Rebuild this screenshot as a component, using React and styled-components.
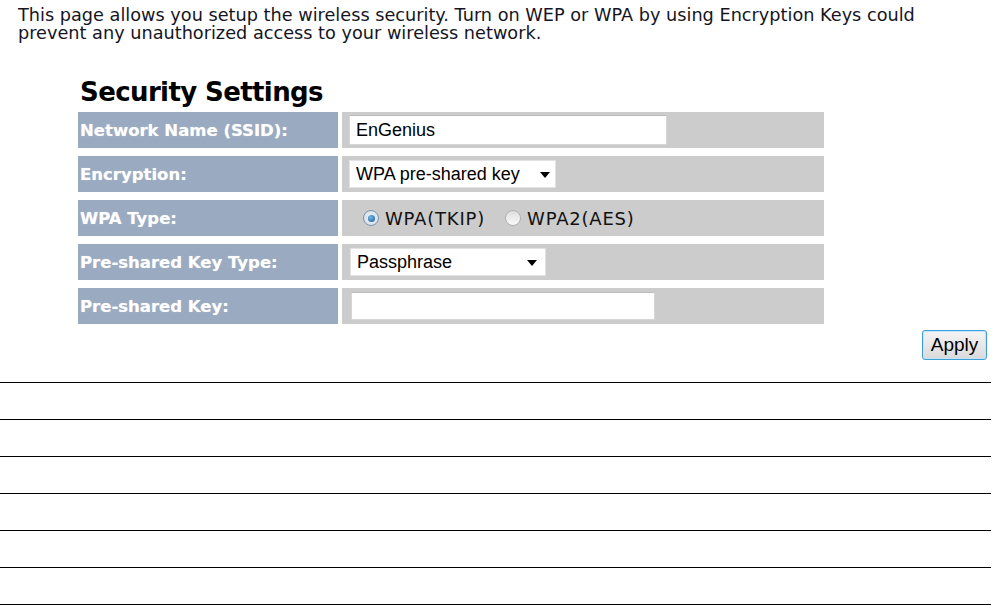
import React from "react";
import styled, { createGlobalStyle } from "styled-components";

const Global = createGlobalStyle`
  html, body { margin: 0; padding: 0; background: #fff; }
  body { font-family: Verdana, "DejaVu Sans", sans-serif; color: #111; }
`;

const Page = styled.div`
  width: 998px;
  height: 605px;
  overflow: hidden;
  display: flex;
  flex-direction: column;
`;

const Intro = styled.p`
  margin: 0;
  padding: 6px 0 0 18px;
  font-size: 17.7px;
  line-height: 18px;
  color: #15151f;
`;

const Section = styled.div`
  margin: 35px 0 0 78px;
  width: 746px;
  display: flex;
  flex-direction: column;
`;

const Heading = styled.h2`
  margin: 0 0 5px 2px;
  font-size: 26px;
  letter-spacing: -0.6px;
  line-height: 30px;
  font-weight: bold;
  color: #000;
`;

const Table = styled.div`
  display: grid;
  grid-template-columns: 260px 482px;
  column-gap: 4px;
  row-gap: 8px;
`;

const Label = styled.div`
  height: 36px;
  background: #9aaac0;
  color: #fff;
  font-weight: bold;
  font-size: 16.5px;
  display: flex;
  align-items: center;
  padding-left: 2px;
  text-shadow: 0 0 1px rgba(255, 255, 255, 0.5);
`;

const Value = styled.div`
  height: 36px;
  background: #cccccc;
  display: flex;
  align-items: center;
  padding-left: ${p => p.$pad || 5}px;
`;

const TextInput = styled.input`
  box-sizing: border-box;
  width: ${p => p.$w}px;
  height: ${p => p.$h}px;
  border: 1px solid #d6d6d6;
  border-top-color: #bdbdbd;
  background: #fff;
  font-family: "Liberation Sans", Arial, sans-serif;
  font-size: 18px;
  color: #000;
  padding: 0 0 0 6px;
  margin: 0;
  outline: none;
`;

const SelectWrap = styled.div`
  position: relative;
  width: ${p => p.$w}px;
  height: 28px;
`;

const Select = styled.select`
  appearance: none;
  -webkit-appearance: none;
  box-sizing: border-box;
  width: 100%;
  height: 100%;
  border: 1px solid #e2e2e2;
  background: #fff;
  font-family: "Liberation Sans", Arial, sans-serif;
  font-size: 18px;
  color: #000;
  padding: 0 0 0 6px;
  margin: 0;
  outline: none;
`;

const Arrow = styled.span`
  position: absolute;
  right: ${p => p.$r}px;
  top: 12px;
  width: 0;
  height: 0;
  border-left: 5px solid transparent;
  border-right: 5px solid transparent;
  border-top: 6px solid #000;
  pointer-events: none;
`;

const RadioGroup = styled.div`
  display: flex;
  align-items: center;
  font-size: 18px;
  letter-spacing: 0.8px;
  color: #111;
`;

const RadioOption = styled.label`
  display: flex;
  align-items: center;
  margin-right: ${p => p.$mr || 0}px;
`;

const RadioDot = styled.span`
  box-sizing: border-box;
  width: 16px;
  height: 16px;
  border-radius: 50%;
  border: 1px solid ${p => (p.$on ? "#7f93ab" : "#b0b0b0")};
  background: ${p => (p.$on ? "radial-gradient(circle, #eef3f8, #cfd9e4)" : "linear-gradient(#dedede, #fafafa)")};
  display: flex;
  align-items: center;
  justify-content: center;
  margin-right: 6px;
  &::after {
    content: "";
    display: ${p => (p.$on ? "block" : "none")};
    width: 7px;
    height: 7px;
    border-radius: 50%;
    background: radial-gradient(circle at 40% 35%, #6fb6ea, #165a96);
  }
`;

const ButtonRow = styled.div`
  display: flex;
  justify-content: flex-end;
  padding: 6px 11px 0 0;
`;

const ApplyButton = styled.button`
  box-sizing: border-box;
  width: 65px;
  height: 30px;
  border: 1px solid #3e9fd8;
  border-radius: 3px;
  background: linear-gradient(#f4f4f4, #e8e8e8 50%, #d9d9d9);
  box-shadow: inset 0 0 0 1px #c4e5f8;
  font-family: "Liberation Sans", Arial, sans-serif;
  font-size: 19px;
  color: #000;
  padding: 0;
`;

const Lines = styled.div`
  margin-top: 22px;
  display: flex;
  flex-direction: column;
`;

const Rule = styled.div`
  width: 991px;
  height: 37px;
  flex: none;
  box-sizing: border-box;
  border-top: 1px solid #000;
`;

export default function App() {
  return (
    <Page>
      <Global />
      <Intro>
        This page allows you setup the wireless security. Turn on WEP or WPA by using Encryption Keys could
        <br />
        prevent any unauthorized access to your wireless network.
      </Intro>
      <Section>
        <Heading>Security Settings</Heading>
        <Table>
          <Label>Network Name (SSID):</Label>
          <Value $pad={7}>
            <TextInput $w={318} $h={30} defaultValue="EnGenius" readOnly />
          </Value>

          <Label>Encryption:</Label>
          <Value $pad={7}>
            <SelectWrap $w={207}>
              <Select defaultValue="wpa">
                <option value="wpa">WPA pre-shared key</option>
              </Select>
              <Arrow $r={6} />
            </SelectWrap>
          </Value>

          <Label>WPA Type:</Label>
          <Value $pad={21}>
            <RadioGroup>
              <RadioOption $mr={20}>
                <RadioDot $on />
                WPA(TKIP)
              </RadioOption>
              <RadioOption>
                <RadioDot />
                WPA2(AES)
              </RadioOption>
            </RadioGroup>
          </Value>

          <Label>Pre-shared Key Type:</Label>
          <Value $pad={8}>
            <SelectWrap $w={196}>
              <Select defaultValue="pass">
                <option value="pass">Passphrase</option>
              </Select>
              <Arrow $r={9} />
            </SelectWrap>
          </Value>

          <Label>Pre-shared Key:</Label>
          <Value $pad={9}>
            <TextInput $w={304} $h={28} defaultValue="" readOnly />
          </Value>
        </Table>
      </Section>
      <ButtonRow>
        <ApplyButton>Apply</ApplyButton>
      </ButtonRow>
      <Lines>
        {Array.from({ length: 7 }).map((_, i) => (
          <Rule key={i} />
        ))}
      </Lines>
    </Page>
  );
}
